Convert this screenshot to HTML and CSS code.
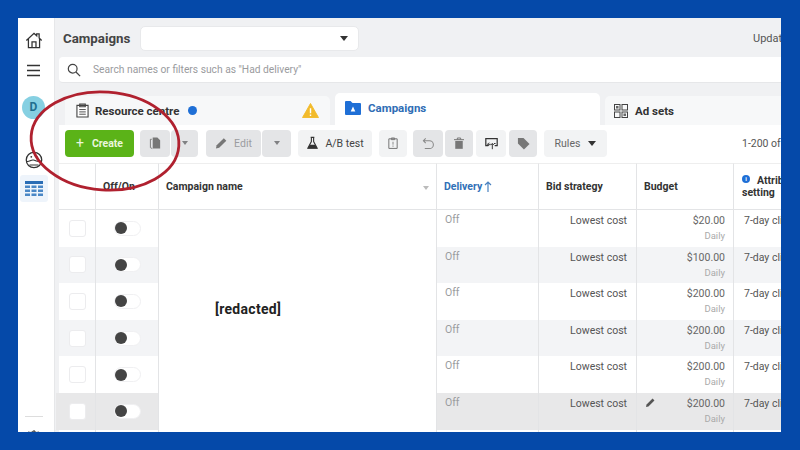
FILE: index.html
```html
<!DOCTYPE html>
<html lang="en">
<head>
<meta charset="utf-8">
<title>Campaigns</title>
<link rel="stylesheet" href="styles.css">
</head>
<body>
<div class="app">
  <aside class="side">
    <svg class="side-ico home" viewBox="0 0 20 20"><path d="M1.500 10.500 10 2.500l3 2.800V3.200h2.700v4.600l2.800 2.700M3.800 8.500V18.500h12.400V8.500M7.800 18.500v-6.500h4.400v6.500" fill="none" stroke="#333" stroke-width="1.400"/></svg>
    <svg class="side-ico menu" viewBox="0 0 16 14"><path d="M1 1.500h14M1 7h14M1 12.500h14" stroke="#333" stroke-width="1.600"/></svg>
    <div class="avatar">D</div>
    <svg class="side-ico smile" viewBox="0 0 20 20"><circle cx="10" cy="10" r="8.600" fill="none" stroke="#333" stroke-width="1.400"/><path d="M1.800 11.500c3 1 4.500-2 7.500-1.500s4.500 2.800 8.800 1M5 15.500h10" fill="none" stroke="#333" stroke-width="1.200"/><circle cx="7" cy="6.500" r="1" fill="#333"/><circle cx="13" cy="6.500" r="1" fill="#333"/></svg>
    <div class="side-tile">
      <svg class="table-ico" viewBox="0 0 18 16"><path d="M0 0h18v3H0z" fill="#2a6db5"/><path d="M0 4.500h5v2.500H0zM6.500 4.500h5v2.500h-5zM13 4.500h5v2.500h-5zM0 8.500h5v2.500H0zM6.500 8.500h5v2.500h-5zM13 8.500h5v2.500h-5zM0 12.500h5V15H0zM6.500 12.500h5V15h-5zM13 12.500h5V15h-5z" fill="#4a87c6"/></svg>
    </div>
    <div class="side-rule"></div>
    <svg class="side-ico gear" viewBox="0 0 20 20"><path d="M10 2l2 2 3-.5 1 3 2.500 1.500-1 3 1 3-3 1-1 3-3-.5-2 2-2-2-3 .5-1-3-3-1 1-3-1-3 2.500-1.500 1-3 3 .5z" fill="none" stroke="#555" stroke-width="1.500"/></svg>
  </aside>
  <main class="main">
    <header class="top">
      <h1 class="title">Campaigns</h1>
      <div class="select"><span class="caret"></span></div>
      <span class="updated">Updated just now</span>
    </header>
    <div class="search">
      <svg class="search-ico" viewBox="0 0 16 16"><circle cx="6.500" cy="6.500" r="5" fill="none" stroke="#444" stroke-width="1.400"/><path d="M10.200 10.200 15 15" stroke="#444" stroke-width="1.500"/></svg>
      <span class="search-text">Search names or filters such as "Had delivery"</span>
    </div>
    <nav class="tabs">
      <div class="tab tab-res">
        <svg class="tab-ico" viewBox="0 0 14 16"><path d="M1 2.500h12V15H1zM4 1h6v3H4z" fill="#fff" stroke="#444" stroke-width="1.200"/><path d="M3.500 7h7M3.500 9.500h7M3.500 12h7" stroke="#444"/></svg>
        <span class="tab-label">Resource centre</span>
        <span class="dot"></span>
        <svg class="warn" viewBox="0 0 18 16"><path d="M9 .5 17.500 15.500H.5z" fill="#f2bb2c" stroke="#f2bb2c" stroke-linejoin="round"/><path d="M9 5.500v5.500M9 12.200v1.600" stroke="#fff" stroke-width="1.500"/></svg>
      </div>
      <div class="tab tab-camp">
        <svg class="folder" viewBox="0 0 16 15"><path d="M0 2a1 1 0 0 1 1-1h4.500l2 2H15a1 1 0 0 1 1 1v10a1 1 0 0 1-1 1H1a1 1 0 0 1-1-1z" fill="#1f6fd6"/><path d="M8 6.500l2.300 5H5.700z" fill="#fff"/></svg>
        <span class="tab-label blue">Campaigns</span>
      </div>
      <div class="tab tab-ads">
        <svg class="tab-ico ads" viewBox="0 0 14 14"><g fill="none" stroke="#444"><rect x=".5" y=".5" width="5.500" height="5.500"/><rect x="8" y=".5" width="5.500" height="5.500"/><rect x=".5" y="8" width="5.500" height="5.500"/><rect x="8" y="8" width="5.500" height="5.500"/></g><rect x="2" y="2" width="2.500" height="2.500" fill="#666"/><rect x="9.500" y="9.500" width="2.500" height="2.500" fill="#666"/></svg>
        <span class="tab-label">Ad sets</span>
      </div>
    </nav>
    <div class="toolbar">
      <button class="btn create"><span class="plus">+</span>Create</button>
      <div class="group">
        <button class="btn off w30"><svg class="ico" viewBox="0 0 14 14"><path d="M3 3H1.500v9l2 1" fill="none" stroke="#777"/><path d="M4 1h5l3 3v9H4z" fill="#777"/></svg></button>
        <button class="btn off w27"><span class="caret grey"></span></button>
      </div>
      <div class="group g-edit">
        <button class="btn off w-edit"><svg class="ico" viewBox="0 0 14 14"><path d="M1 13l.8-3.500L9.500 1.800l2.700 2.700-7.700 7.700z" fill="#777"/></svg><span class="muted">Edit</span></button>
        <button class="btn off w29"><span class="caret grey"></span></button>
      </div>
      <button class="btn lite w-ab"><svg class="ico" viewBox="0 0 14 14"><path d="M5 1h4M5.800 1v4.500L2 12.500h10L8.200 5.500V1" fill="none" stroke="#333" stroke-width="1.200"/><path d="M4 9h6l2 3.800H2z" fill="#333"/></svg><span class="dark">A/B test</span></button>
      <button class="btn lite w28 m7"><svg class="ico small" viewBox="0 0 12 14"><path d="M1 2h10v11.500H1zM4 1h4v2H4z" fill="none" stroke="#777" stroke-width="1.200"/><path d="M6 5.500v3.500M6 10v1.500" stroke="#777"/></svg></button>
      <button class="btn off w30 m6"><svg class="ico big" viewBox="0 0 14 14"><path d="M4 1.500 1.500 4 4 6.500M1.500 4H8a4 4 0 0 1 0 8.500H3" fill="none" stroke="#888" stroke-width="1.100"/></svg></button>
      <button class="btn off w28 m2"><svg class="ico small" viewBox="0 0 12 14"><path d="M0 3h12M4 3V1h4v2" fill="none" stroke="#777" stroke-width="1.200"/><path d="M1.500 4.500h9V14h-9z" fill="#777"/></svg></button>
      <button class="btn lite w30 m3"><svg class="ico big" viewBox="0 0 16 14"><path d="M4 9.500H1V1h14v8.500h-3" fill="none" stroke="#333" stroke-width="1.500"/><path d="M7 8H3.500M5 6 3 8l2 2" fill="none" stroke="#333" stroke-width="1.200"/><path d="M9 14V7M7 9l2-2 2 2M11 7h2" fill="none" stroke="#333" stroke-width="1.200"/></svg></button>
      <button class="btn off w28 m3"><svg class="ico big" viewBox="0 0 14 14"><path d="M1 1h6l6.500 6.500-6 6L1 7z" fill="#777"/></svg></button>
      <button class="btn lite w-rules"><span class="muted2">Rules</span><span class="caret"></span></button>
      <span class="count">1-200 of 200</span>
    </div>
    <section class="grid">
      <div class="hd"></div>
      <div class="hd">Off/On</div>
      <div class="hd hd-name">Campaign name<span class="caret pale"></span></div>
      <div class="hd hd-blue">Delivery<svg class="arrow" viewBox="0 0 8 11"><path d="M4 11V1M1 4l3-3 3 3" fill="none" stroke="#4a82c0" stroke-width="1.200"/></svg></div>
      <div class="hd">Bid strategy</div>
      <div class="hd">Budget</div>
      <div class="hd hd-attr"><span class="attr-top"><span class="info">i</span>Attribution</span><span>setting</span></div>

      <div class="name-cell"><span class="redacted">[redacted]</span></div>

      <div class="c c-first"><span class="box"></span></div><div class="c"><span class="tog"><i></i></span></div><div class="c off-txt">Off</div><div class="c bid">Lowest cost</div><div class="c bud"><span>$20.00</span><small>Daily</small></div><div class="c attr">7-day click or 1-day view</div>

      <div class="c c-first alt"><span class="box"></span></div><div class="c alt"><span class="tog"><i></i></span></div><div class="c off-txt alt">Off</div><div class="c bid alt">Lowest cost</div><div class="c bud alt"><span>$100.00</span><small>Daily</small></div><div class="c attr alt">7-day click or 1-day view</div>

      <div class="c c-first"><span class="box"></span></div><div class="c"><span class="tog"><i></i></span></div><div class="c off-txt">Off</div><div class="c bid">Lowest cost</div><div class="c bud"><span>$200.00</span><small>Daily</small></div><div class="c attr">7-day click or 1-day view</div>

      <div class="c c-first alt"><span class="box"></span></div><div class="c alt"><span class="tog"><i></i></span></div><div class="c off-txt alt">Off</div><div class="c bid alt">Lowest cost</div><div class="c bud alt"><span>$200.00</span><small>Daily</small></div><div class="c attr alt">7-day click or 1-day view</div>

      <div class="c c-first"><span class="box"></span></div><div class="c"><span class="tog"><i></i></span></div><div class="c off-txt">Off</div><div class="c bid">Lowest cost</div><div class="c bud"><span>$200.00</span><small>Daily</small></div><div class="c attr">7-day click or 1-day view</div>

      <div class="c c-first hov"><span class="box"></span></div><div class="c hov"><span class="tog"><i></i></span></div><div class="c off-txt hov">Off</div><div class="c bid hov">Lowest cost</div><div class="c bud hov has-pen"><svg class="pen" viewBox="0 0 10 10"><path d="M0 10l.6-2.700L7.300.6l2.100 2.100-6.700 6.700z" fill="#555"/></svg><span>$200.00</span><small>Daily</small></div><div class="c attr hov">7-day click or 1-day view</div>

      <div class="c c-first"></div><div class="c"></div><div class="c"></div><div class="c"></div><div class="c"></div><div class="c"></div>
    </section>
    <svg class="ring" viewBox="0 0 160 110"><ellipse cx="79" cy="53" rx="74" ry="49" transform="rotate(4 79 53)" fill="none" stroke="#b0212f" stroke-width="2.800"/></svg>
  </main>
</div>
</body>
</html>
```

FILE: styles.css
```css
* { box-sizing: border-box; }
html, body { margin: 0; height: 100%; }
body {
  width: 800px;
  height: 450px;
  overflow: hidden;
  background: #0549a9;
  padding: 18px 19px 18px 18px;
  font-family: Roboto, "Liberation Sans", sans-serif;
  color: #444;
}
.app {
  display: flex;
  width: 763px;
  height: 414px;
  overflow: hidden;
  background: #f0f1f3;
  position: relative;
}
.side {
  width: 36px;
  flex: none;
  background: #fff;
  display: flex;
  flex-direction: column;
  align-items: center;
  padding: 13px 5px 0 0;
  overflow: hidden;
}
.side-ico { display: block; flex: none; }
.home { width: 18px; height: 18px; }
.menu { width: 15px; height: 13px; margin-top: 15px; }
.avatar {
  width: 23px;
  height: 23px;
  border-radius: 50%;
  background: #86d0e2;
  color: #1f6f8f;
  font-weight: 700;
  font-size: 12px;
  line-height: 23px;
  text-align: center;
  margin-top: 19px;
  flex: none;
}
.smile { width: 18px; height: 18px; margin-top: 32px; }
.side-tile {
  width: 28px;
  height: 27px;
  background: #eef4fb;
  border-radius: 3px;
  margin-top: 6px;
  display: flex;
  align-items: center;
  justify-content: center;
  flex: none;
}
.table-ico { width: 18px; height: 16px; }
.side-rule { width: 18px; height: 1px; background: #ddd; margin-top: 214px; flex: none; }
.gear { width: 18px; height: 18px; margin-top: 12px; }

.main {
  flex: 1;
  min-width: 0;
  padding-left: 4px;
  display: flex;
  flex-direction: column;
  position: relative;
  border-left: 1px solid #e6e7e9;
}
.top { height: 39px; display: flex; align-items: center; flex: none; padding-top: 2px; }
.title { margin: 0 0 0 4px; font-size: 13.300px; font-weight: 700; color: #444; width: 77px; flex: none; white-space: nowrap; }
.select {
  width: 219px;
  height: 25px;
  flex: none;
  background: #fff;
  border: 1px solid #e8e9eb;
  border-radius: 5px;
  display: flex;
  align-items: center;
  justify-content: flex-end;
  padding-right: 10px;
}
.caret {
  display: inline-block;
  width: 0;
  height: 0;
  border-left: 4px solid transparent;
  border-right: 4px solid transparent;
  border-top: 5px solid #333;
}
.caret.grey { border-top-color: #808183; border-left-width: 3.500px; border-right-width: 3.500px; border-top-width: 4px; }
.caret.pale { border-top-color: #bbb; border-left-width: 3px; border-right-width: 3px; border-top-width: 4px; position: absolute; right: 7px; top: 22px; }
.updated { margin-left: 394px; font-size: 11px; white-space: nowrap; flex: none; color: #555; }

.search {
  height: 26px;
  flex: none;
  background: #fff;
  border-radius: 4px 0 0 4px;
  display: flex;
  align-items: center;
  padding-left: 8px;
  border-bottom: 1px solid #e6e7e9;
}
.search-ico { width: 14px; height: 14px; flex: none; }
.search-text { margin-left: 12px; font-size: 10.250px; color: #9a9b9e; white-space: nowrap; }

.tabs { height: 42px; flex: none; display: flex; align-items: flex-end; padding-left: 6px; gap: 5px; }
.tab { display: flex; align-items: center; flex: none; background: #f7f8f9; height: 29px; border-radius: 5px 5px 0 0; width: 265px; padding-left: 11px; }
.tab-camp { background: #fff; height: 32px; padding-left: 10px; padding-bottom: 3px; }
.tab-ads { width: 190px; padding-left: 9px; }
.tab-ico { width: 13px; height: 15px; flex: none; }
.tab-ico.ads { width: 14px; height: 14px; }
.folder { width: 16px; height: 15px; flex: none; }
.tab-label { font-size: 11.500px; font-weight: 700; color: #333; margin-left: 6px; white-space: nowrap; }
.tab-camp .tab-label { margin-left: 7px; }
.tab-ads .tab-label { margin-left: 7px; }
.tab-label.blue { color: #2f6db5; font-size: 11.500px; }
.dot { width: 9px; height: 9px; border-radius: 50%; background: #1f6fd6; margin-left: 9px; flex: none; }
.warn { width: 17px; height: 15px; margin-left: 105px; flex: none; }

.toolbar { height: 38px; flex: none; background: #fff; display: flex; align-items: center; padding-left: 6px; padding-bottom: 2px; }
.btn {
  height: 27px;
  border: 0;
  padding: 0;
  margin: 0;
  border-radius: 4px;
  display: flex;
  align-items: center;
  justify-content: center;
  font-family: inherit;
  flex: none;
}
.create {
  width: 69px;
  margin-right: 6px;
  background: #5bb318;
  color: #eaf6dd;
  font-size: 10.500px;
  font-weight: 700;
}
.plus { font-size: 14px; font-weight: 400; margin-right: 8px; line-height: 1; }
.off { background: #e4e5e7; }
.lite { background: #f2f3f4; }
.group { display: flex; gap: 1px; flex: none; }
.g-edit { margin-left: 8px; }
.w27 { width: 27px; }
.w28 { width: 28px; }
.w29 { width: 29px; }
.w30 { width: 30px; }
.w-edit { width: 55px; gap: 6px; }
.w-ab { width: 74px; margin-left: 7px; gap: 6px; }
.w-rules { width: 63px; margin-left: 7px; gap: 8px; }
.m2 { margin-left: 2px; }
.m3 { margin-left: 3px; }
.m6 { margin-left: 6px; }
.m7 { margin-left: 7px; }
.ico { width: 13px; height: 14px; display: block; flex: none; }
.ico.big { width: 13px; height: 13px; }
.ico.small { width: 10px; height: 12px; }
.muted { font-size: 10.500px; color: #9b9ca0; }
.muted2 { font-size: 10.500px; color: #666; }
.dark { font-size: 10.500px; color: #444; }
.count { margin-left: 135px; flex: none; font-size: 10.500px; color: #555; white-space: nowrap; }

.grid {
  display: grid;
  grid-template-columns: 37px 63px 278px 102px 98px 97px 160px;
  grid-template-rows: 47px repeat(7, 36.600px);
  flex: none;
  background: #fff;
  width: 835px;
}
.hd {
  display: flex;
  align-items: center;
  padding-left: 7px;
  font-size: 10.500px;
  font-weight: 700;
  color: #333;
  border-right: 1px solid #e3e4e6;
  border-bottom: 1px solid #e3e4e6;
  border-top: 1px solid #eee;
  position: relative;
  white-space: nowrap;
}
.hd-blue { color: #3170b7; }
.arrow { width: 8px; height: 11px; margin-left: 2px; }
.hd-attr { flex-direction: column; align-items: flex-start; justify-content: center; padding-left: 8px; border-right: 0; line-height: 12px; }
.attr-top { display: flex; align-items: center; }
.info {
  width: 8px;
  height: 8px;
  border-radius: 50%;
  background: #1f6fd6;
  color: #fff;
  font-size: 6px;
  line-height: 8px;
  text-align: center;
  margin-right: 7px;
  margin-top: -3px;
}
.name-cell {
  grid-column: 3;
  grid-row: 2 / span 7;
  background: #fff;
  padding: 91px 0 0 56px;
  border-right: 1px solid #e3e4e6;
}
.redacted { font-size: 14px; font-weight: 700; color: #222; letter-spacing: .3px; line-height: 17px; display: block; }
.c {
  border-right: 1px solid #e3e4e6;
  display: flex;
  align-items: center;
  justify-content: center;
  font-size: 10.500px;
  background: #fff;
  min-width: 0;
}
.alt { background: #f3f4f6; }
.hov { background: #e8e8e9; }
.c-first.hov { box-shadow: -3px 0 0 #e8e8e9; }
.box { width: 17px; height: 17px; background: #fff; border: 1px solid #ececee; border-radius: 3px; }
.tog { width: 27px; height: 15px; border-radius: 8px; background: #fff; border: 1px solid #f0f0f2; display: flex; align-items: center; margin-left: 1px; }
.tog i { width: 12px; height: 12px; border-radius: 50%; background: #444; display: block; }
.off-txt { justify-content: flex-start; align-items: flex-start; padding: 3px 0 0 8px; color: #9a9b9e; }
.bid { justify-content: flex-end; align-items: flex-start; padding: 4px 9px 0 0; color: #555; }
.bud { flex-direction: column; align-items: flex-end; justify-content: flex-start; padding: 4px 8px 0 0; color: #666; position: relative; }
.bud small { font-size: 9.500px; color: #aaa; margin-top: 3px; }
.pen { width: 9px; height: 9px; position: absolute; left: 9px; top: 5px; }
.attr { justify-content: flex-start; align-items: flex-start; padding: 4px 0 0 10px; color: #555; white-space: nowrap; border-right: 0; }
.ring { position: absolute; left: -29px; top: 70px; width: 160px; height: 110px; overflow: visible; pointer-events: none; }
```
